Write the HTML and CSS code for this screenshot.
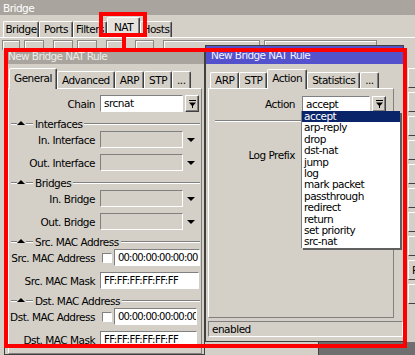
FILE: index.html
```html
<!DOCTYPE html>
<html lang="en">
<head>
  <meta charset="UTF-8" />
  <meta name="viewport" content="width=device-width, initial-scale=1.0"/>
  <title>Bridge - New Bridge NAT Rule</title>
  <link rel="stylesheet" href="styles.css">
</head>
<body>
  <div class="main-title">Bridge</div>
  <div class="main-tabs">
    <span class="mtab t-bridge">Bridge</span>
    <span class="mtab t-ports">Ports</span>
    <span class="mtab t-filters">Filters</span>
    <span class="mtab t-nat active">NAT</span>
    <span class="mtab t-hosts">Hosts</span>
  </div>
  <div class="toolbar">
    <div class="tb-group"><span class="tb w18"></span><span class="tb"></span></div>
    <div class="tb-group"><span class="tb"></span><span class="tb"></span></div>
    <div class="tb-group"><span class="tb"></span></div>
    <div class="tb-group"><span class="tb w19"></span></div>
    <div class="tb-group"><span class="tb w97"></span><span class="tb w113"></span></div>
  </div>

  <div class="desk">
    <!-- inactive copy of the rule dialog -->
    <div class="win win-left">
      <div class="win-title">New Bridge NAT Rule</div>
      <div class="tabs">
        <span class="tab active">General</span>
        <span class="tab">Advanced</span>
        <span class="tab">ARP</span>
        <span class="tab">STP</span>
        <span class="tab">...</span>
      </div>
      <div class="panel">
        <div class="row">
          <span class="lbl">Chain</span>
          <span class="field w83">srcnat</span>
          <span class="btn">
            <svg width="7" height="8" viewBox="0 0 7 8"><rect width="7" height="1"/><path d="M0 2.5h7L3.5 6.5z"/><rect x="3" y="6" width="1" height="2"/></svg>
          </span>
        </div>

        <div class="hdr">
          <span class="etch etch-a"></span>
          <svg width="8" height="4" viewBox="0 0 8 4"><path d="M0 4h8L4 0z"/></svg>
          <span class="etch etch-b"></span>
          <span class="hdr-text">Interfaces</span>
          <span class="etch etch-c"></span>
        </div>
        <div class="row">
          <span class="lbl">In. Interface</span>
          <span class="field off w83"></span>
          <svg class="arrow" width="8" height="4" viewBox="0 0 8 4"><path d="M0 0h8L4 4z"/></svg>
        </div>
        <div class="row">
          <span class="lbl">Out. Interface</span>
          <span class="field off w83"></span>
          <svg class="arrow" width="8" height="4" viewBox="0 0 8 4"><path d="M0 0h8L4 4z"/></svg>
        </div>

        <div class="hdr">
          <span class="etch etch-a"></span>
          <svg width="8" height="4" viewBox="0 0 8 4"><path d="M0 4h8L4 0z"/></svg>
          <span class="etch etch-b"></span>
          <span class="hdr-text">Bridges</span>
          <span class="etch etch-c"></span>
        </div>
        <div class="row">
          <span class="lbl">In. Bridge</span>
          <span class="field off w83"></span>
          <svg class="arrow" width="8" height="4" viewBox="0 0 8 4"><path d="M0 0h8L4 4z"/></svg>
        </div>
        <div class="row">
          <span class="lbl">Out. Bridge</span>
          <span class="field off w83"></span>
          <svg class="arrow" width="8" height="4" viewBox="0 0 8 4"><path d="M0 0h8L4 4z"/></svg>
        </div>

        <div class="hdr">
          <span class="etch etch-a"></span>
          <svg width="8" height="4" viewBox="0 0 8 4"><path d="M0 4h8L4 0z"/></svg>
          <span class="etch etch-b"></span>
          <span class="hdr-text">Src. MAC Address</span>
          <span class="etch etch-c"></span>
        </div>
        <div class="row">
          <span class="lbl">Src. MAC Address</span>
          <span class="check"></span>
          <span class="field mac w86">00:00:00:00:00:00</span>
        </div>
        <div class="row">
          <span class="lbl">Src. MAC Mask</span>
          <span class="field mask w99">FF:FF:FF:FF:FF:FF</span>
        </div>

        <div class="hdr">
          <span class="etch etch-a"></span>
          <svg width="8" height="4" viewBox="0 0 8 4"><path d="M0 4h8L4 0z"/></svg>
          <span class="etch etch-b"></span>
          <span class="hdr-text">Dst. MAC Address</span>
          <span class="etch etch-c"></span>
        </div>
        <div class="row">
          <span class="lbl">Dst. MAC Address</span>
          <span class="check"></span>
          <span class="field mac w83">00:00:00:00:00:00</span>
        </div>
        <div class="row">
          <span class="lbl">Dst. MAC Mask</span>
          <span class="field mask w97">FF:FF:FF:FF:FF:FF</span>
        </div>
      </div>
    </div>

    <div class="right-col">
      <div class="right-top">
        <!-- active copy, Action tab open -->
        <div class="win win-right">
          <div class="win-title">New Bridge NAT Rule</div>
          <div class="tabs">
            <span class="tab">ARP</span>
            <span class="tab">STP</span>
            <span class="tab active">Action</span>
            <span class="tab">Statistics</span>
            <span class="tab">...</span>
          </div>
          <div class="panel">
            <div class="row row-s first">
              <span class="lbl">Action</span>
              <span class="field w68">accept</span>
              <span class="btn">
                <svg width="7" height="8" viewBox="0 0 7 8"><rect width="7" height="1"/><path d="M0 2.5h7L3.5 6.5z"/><rect x="3" y="6" width="1" height="2"/></svg>
              </span>
            </div>
            <div class="etch sep"></div>
            <div class="row row-s log">
              <span class="lbl">Log Prefix</span>
              <span class="field w84"></span>
            </div>
          </div>
          <div class="status">enabled</div>

          <div class="droplist">
            <div class="sel">accept</div>
            <div>arp-reply</div>
            <div>drop</div>
            <div>dst-nat</div>
            <div>jump</div>
            <div>log</div>
            <div>mark packet</div>
            <div>passthrough</div>
            <div>redirect</div>
            <div>return</div>
            <div>set priority</div>
            <div>src-nat</div>
          </div>
        </div>
        <div class="strip">
          <span class="sbtn"></span>
          <span class="sbtn"></span>
          <span class="sbtn"></span>
          <span class="sbtn"></span>
          <span class="sbtn"></span>
          <span class="sbtn"></span>
          <span class="sbtn"></span>
          <span class="sbtn"></span>
          <span class="sbtn">P</span>
          <span class="sbtn"></span>
        </div>
      </div>
      <div class="right-bottom">
        <span class="rb-light"></span>
        <span class="rb-dark"></span>
      </div>
    </div>
  </div>

  <!-- red annotation -->
  <div class="mark mark-tab"></div>
  <div class="mark-link"></div>
  <div class="mark mark-area"></div>
</body>
</html>
```
FILE: styles.css
```css
* {
  box-sizing: border-box;
}
body {
  margin: 0;
  width: 415px;
  height: 355px;
  overflow: hidden;
  position: relative;
  background: #d4d0c8;
  font-family: "DejaVu Sans", sans-serif;
  font-size: 10.5px;
  letter-spacing: -0.5px;
  color: #000;
}

/* Bridge window behind */
.main-title {
  height: 15px;
  padding-left: 3px;
  line-height: 16px;
  background: #a9a59e;
  color: #fff;
}
.main-tabs {
  display: flex;
  align-items: flex-end;
  height: 22px;
  padding-left: 3px;
}
.mtab {
  height: 16px;
  line-height: 15px;
  text-align: center;
  border: 1px solid;
  border-bottom: 0;
  border-color: #fff #404040 transparent #fff;
  border-radius: 2px 2px 0 0;
  box-shadow: inset -1px 0 #808080;
}
.mtab.active {
  height: 20px;
  line-height: 19px;
  background: #e6e3dd;
}
.t-bridge { width: 36px; }
.t-ports { width: 34px; }
.t-filters { width: 34px; }
.t-nat { width: 33px; }
.t-hosts { width: 32px; }

.toolbar {
  display: flex;
  gap: 9px;
  height: 8px;
  padding: 2px 0 0 2px;
  border-top: 1px solid #fff;
}
.tb-group {
  display: flex;
  gap: 4px;
}
.tb {
  width: 20px;
  height: 10px;
  border: 1px solid #8a8780;
  border-bottom: 0;
  box-shadow: inset 1px 1px #fff;
}
.tb.w18 { width: 18px; }
.tb.w19 { width: 19px; }
.tb.w97 { width: 97px; }
.tb.w113 { width: 113px; }

/* dialogs */
.desk {
  display: flex;
  height: 310px;
}
.win {
  position: relative;
  display: flex;
  flex-direction: column;
  flex: none;
  background: #d4d0c8;
  border: 1px solid #404040;
}
.win-left {
  width: 201px;
  margin: 3px 0 0 4px;
}
.win-right {
  width: 199px;
  height: 297px;
}
.win-title {
  flex: none;
  height: 15px;
  padding-left: 3px;
  line-height: 15px;
  background: #a9a59e;
  color: #eeece8;
  letter-spacing: -0.6px;
  white-space: nowrap;
}
.win-right .win-title {
  height: 18px;
  padding: 2px 0 0 5px;
  background: #5352cc;
  color: #f0f0ff;
}
.tabs {
  flex: none;
  display: flex;
  align-items: flex-end;
  height: 24px;
  padding-left: 4px;
}
.tab {
  height: 17px;
  padding: 0 4px;
  line-height: 16px;
  border: 1px solid;
  border-bottom: 0;
  border-color: #fff #404040 transparent #fff;
  border-radius: 2px 2px 0 0;
  box-shadow: inset -1px 0 #808080;
  white-space: nowrap;
}
.tab.active {
  position: relative;
  z-index: 1;
  height: 21px;
  margin-bottom: -1px;
  line-height: 18px;
  background: #d4d0c8;
}
.win-right .tab {
  height: 16px;
  line-height: 15px;
}
.win-right .tab.active {
  height: 20px;
  line-height: 17px;
}
.panel {
  flex: 1;
  margin: 0 2px 0 3px;
  border: 1px solid;
  border-color: #fff #808080 #808080 #fff;
}
.win-right .panel {
  margin: 0 9px 0 2px;
}
.status {
  flex: none;
  height: 16px;
  margin: 3px 0 4px 2px;
  padding-left: 3px;
  line-height: 14px;
  border: 1px solid;
  border-color: #808080 #fff #fff #808080;
}

/* form rows */
.row {
  display: flex;
  align-items: center;
  height: 17px;
  margin-top: 6px;
}
.hdr + .row {
  margin-top: 0;
}
.row-s {
  height: 16px;
}
.row.first {
  margin-top: 7px;
}
.row.log {
  margin-top: 25px;
}
.lbl {
  flex: none;
  display: flex;
  justify-content: flex-end;
  width: 86px;
  margin-right: 5px;
  white-space: nowrap;
}
.win-right .lbl {
  margin-right: 7px;
}
.field {
  flex: none;
  height: 100%;
  padding-left: 3px;
  line-height: 15px;
  background: #fff;
  border: 1px solid;
  border-color: #808080 #fff #fff #808080;
  white-space: nowrap;
  overflow: hidden;
}
.row-s .field {
  line-height: 14px;
}
.field.off {
  background: #d4d0c8;
}
.field.mac {
  font-size: 10px;
  letter-spacing: -0.8px;
}
.field.mask {
  font-size: 10px;
  letter-spacing: -0.45px;
}
.w68 { width: 68px; }
.w83 { width: 83px; }
.w84 { width: 84px; }
.w86 { width: 86px; }
.w97 { width: 97px; }
.w99 { width: 99px; }

.btn {
  flex: none;
  display: flex;
  align-items: center;
  justify-content: center;
  width: 14px;
  height: 100%;
  margin-left: 2px;
  border: 1px solid;
  border-color: #fff #404040 #404040 #fff;
  box-shadow: inset -1px -1px #808080;
}
.arrow {
  flex: none;
  margin-left: 4px;
}
.check {
  flex: none;
  width: 10px;
  height: 10px;
  margin: 0 2px;
  background: #fff;
  border: 1px solid;
  border-color: #808080 #fff #fff #808080;
}

/* group headers */
.hdr {
  display: flex;
  align-items: center;
  height: 15px;
  margin-top: 4px;
}
.etch {
  height: 2px;
  border-top: 1px solid #808080;
  border-bottom: 1px solid #fff;
}
.etch-a {
  width: 6px;
  margin-left: 2px;
}
.hdr svg {
  flex: none;
  margin: 0 1px 1px 0;
}
.etch-b {
  width: 7px;
}
.hdr-text {
  margin: 0 2px;
  white-space: nowrap;
}
.etch-c {
  flex: 1;
  margin-right: 1px;
}
.sep {
  margin: 8px 6px 0 6px;
}

/* open combo list */
.droplist {
  position: absolute;
  left: 95px;
  top: 65px;
  z-index: 2;
  width: 99px;
  background: #fff;
  border-left: 1px solid #808080;
  box-shadow: 2px 2px 0 #5f5f5f;
}
.droplist div {
  height: 11.4px;
  padding-left: 2px;
  line-height: 11px;
  white-space: nowrap;
}
.droplist .sel {
  background: #0a246a;
  color: #fff;
}

/* what peeks out on the right and bottom */
.right-col {
  display: flex;
  flex-direction: column;
  width: 210px;
}
.right-top {
  display: flex;
}
.strip {
  flex: 1;
  display: flex;
  flex-direction: column;
  gap: 4px;
  padding: 23px 0 0 4px;
  overflow: hidden;
}
.sbtn {
  flex: none;
  width: 20px;
  height: 20px;
  padding-left: 3px;
  line-height: 18px;
  border: 1px solid;
  border-color: #fff #404040 #404040 #fff;
}
.right-bottom {
  flex: 1;
  display: flex;
}
.rb-light {
  width: 113px;
}
.rb-dark {
  flex: 1;
  background: #6f6f6f;
  border-left: 1px solid #404040;
}

/* red markup */
.mark {
  position: absolute;
  z-index: 5;
  border: 4px solid #f00;
  pointer-events: none;
}
.mark-tab {
  left: 99px;
  top: 12px;
  width: 48px;
  height: 25px;
}
.mark-link {
  position: absolute;
  z-index: 5;
  left: 122px;
  top: 36px;
  width: 4px;
  height: 14px;
  background: #f00;
}
.mark-area {
  left: 4px;
  top: 48px;
  width: 403px;
  height: 300px;
}
```
